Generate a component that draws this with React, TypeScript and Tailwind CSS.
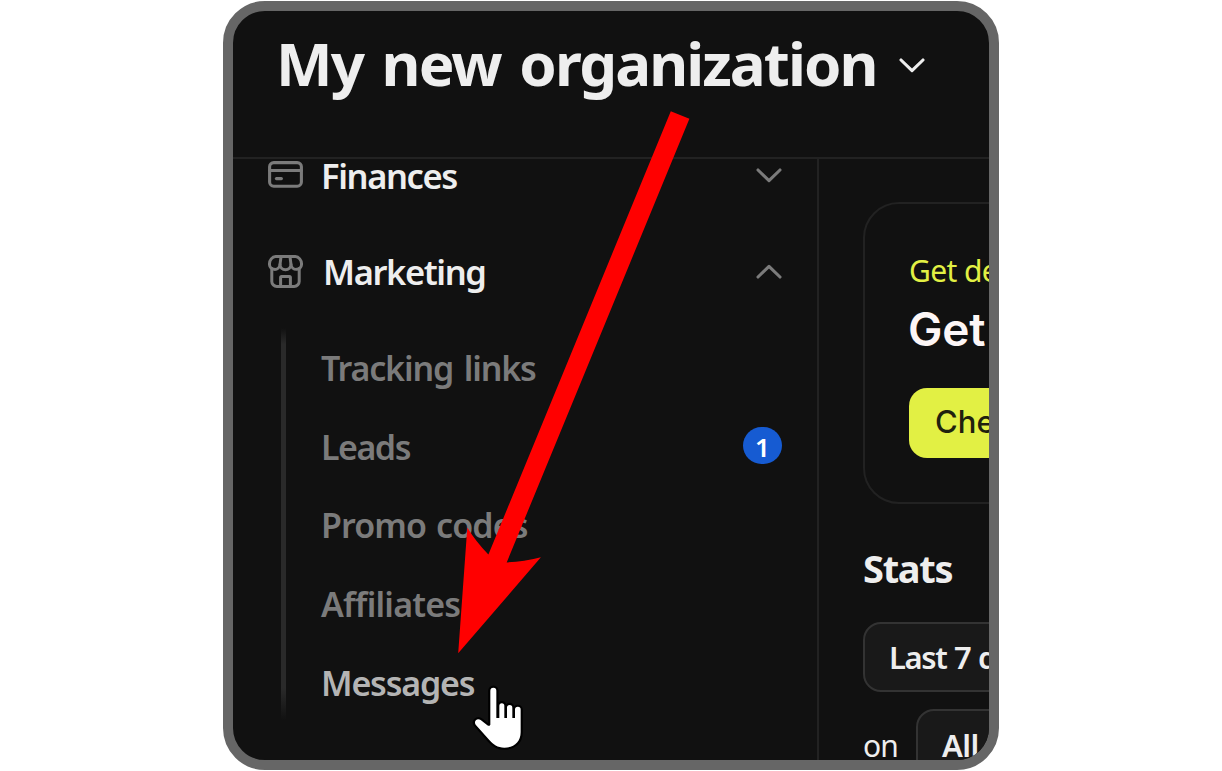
import React from "react";

interface SubItem {
  label: string;
  tracking: string;
  badge?: number;
  active?: boolean;
}

const subItems: SubItem[] = [
  { label: "Tracking links", tracking: "tracking-[-1.15px] [word-spacing:3px]" },
  { label: "Leads", tracking: "tracking-[-1.5px]", badge: 1 },
  { label: "Promo codes", tracking: "tracking-[-0.9px] [word-spacing:2px]" },
  { label: "Affiliates", tracking: "tracking-[-0.8px]" },
  { label: "Messages", tracking: "tracking-[-1.2px]", active: true },
];

const Chevron: React.FC<{ className?: string }> = ({ className = "" }) => (
  <svg
    width="26"
    height="15"
    viewBox="0 0 26 15"
    fill="none"
    stroke="currentColor"
    strokeWidth="3.1"
    strokeLinecap="round"
    strokeLinejoin="round"
    className={`shrink-0 ${className}`}
  >
    <path d="M2 2 L13 12.6 L24 2" />
  </svg>
);

const CardIcon = () => (
  <svg width="35" height="28" viewBox="0 0 35 28" fill="none" stroke="currentColor" strokeWidth="3.1" strokeLinecap="round">
    <rect x="1.6" y="1.6" width="31.8" height="23.6" rx="4.2" />
    <path d="M1.6 9.5 H33.4" />
    <path d="M8.4 17.6 H13.4" />
  </svg>
);

const StoreIcon = () => (
  <svg
    width="35"
    height="33"
    viewBox="0 0 35 33"
    fill="none"
    stroke="currentColor"
    strokeWidth="3"
    strokeLinecap="round"
    strokeLinejoin="round"
  >
    <path d="M7.6 1.6 H27.4 C30.8 1.6 33.5 5.4 33.5 8.6 A5.2 5.2 0 0 1 23 9.6 A5.5 5.2 0 0 1 12 9.6 A5.2 5.2 0 0 1 1.5 8.6 C1.5 5.4 4.2 1.6 7.6 1.6 Z" />
    <path d="M13 1.8 L12 9.6 M22 1.8 L23 9.6" />
    <path d="M3.8 13.4 V26.4 A5 5 0 0 0 8.8 31.4 H26.2 A5 5 0 0 0 31.2 26.4 V13.4" />
    <path d="M12.6 31 V22.6 A1 1 0 0 1 13.6 21.6 H21.4 A1 1 0 0 1 22.4 22.6 V31" />
  </svg>
);

const Sidebar = () => (
  <nav className="flex w-[586px] shrink-0 flex-col border-r-2 border-[#222222] pr-[35px] pl-[35px]">
    <div className="flex h-8 items-center text-[#7b7b7b]">
      <CardIcon />
      <span className="ml-[18px] flex-1 pt-px text-[34.5px] leading-8 font-semibold tracking-[-1.4px] text-[#eeeeee]">
        Finances
      </span>
      <Chevron />
    </div>

    <div className="mt-[64px] flex h-8 items-center text-[#7b7b7b]">
      <StoreIcon />
      <span className="ml-[20px] flex-1 pt-[2px] text-[34.5px] leading-8 font-semibold tracking-[-1.4px] text-[#eeeeee]">
        Marketing
      </span>
      <Chevron className="rotate-180" />
    </div>

    <div className="mt-[41px] flex">
      <div className="ml-[13px] h-[392px] w-[5px] bg-[linear-gradient(to_bottom,transparent,#2a2a2a_16px,#2a2a2a_calc(100%-32px),transparent)]" />
      <ul className="ml-[35px] flex-1">
        {subItems.map((item) => (
          <li
            key={item.label}
            className={`flex h-[78.75px] items-center justify-between pt-[2px] text-[34px] font-semibold ${item.tracking} ${
              item.active ? "text-[#b4b4b4]" : "text-[#7b7b7b]"
            }`}
          >
            {item.label}
            {item.badge && (
              <span className="-mt-[4px] flex h-[37px] w-[39px] items-center justify-center rounded-full bg-[#165bd2] pt-[4px] text-[26px] font-semibold tracking-normal text-white">
                {item.badge}
              </span>
            )}
          </li>
        ))}
      </ul>
    </div>
  </nav>
);

const Dashboard = () => (
  <main className="w-[400px] shrink-0 pt-[43px] pl-[44px] text-[#eeeeee]">
    <section className="h-[302px] rounded-[36px] border-2 border-[#222222] pt-[49px] pl-[44px]">
      <p className="text-[30px] leading-[36px] tracking-[-0.6px] text-[#e2f044]">Get demo</p>
      <h2 className="-ml-px mt-[12px] font-[Inter] text-[46px] leading-[56px] font-semibold tracking-[-0.2px] text-[#fdf6f6]">
        Get started
      </h2>
      <button className="mt-[31px] h-[70px] w-[240px] rounded-[18px] bg-[#e2f044] pb-[2px] pl-[26px] text-left font-[Inter] text-[31px] font-medium text-[#1f210e]">
        Check it out
      </button>
    </section>

    <h3 className="mt-[39px] text-[38px] leading-[50px] font-bold tracking-[-1.3px]">Stats</h3>
    <div className="mt-[29px] flex h-[70px] w-[240px] items-center rounded-[18px] border-2 border-[#333333] bg-[#191919] pt-px pl-[24px] text-[31px] font-semibold tracking-[-1.4px] [word-spacing:1px]">
      Last 7 days
    </div>
    <div className="mt-[17px] flex items-center">
      <span className="w-[53px] pt-[3px] text-[30px] tracking-[-0.8px]">on</span>
      <div className="flex h-[70px] w-[240px] items-center rounded-[18px] border-2 border-[#333333] bg-[#191919] pt-[2px] pl-[24px] text-[31px] font-semibold tracking-[-0.5px]">
        All time
      </div>
    </div>
  </main>
);

const PointerArrow = () => (
  <svg width="1222" height="771" viewBox="0 0 1222 771" className="pointer-events-none absolute top-0 left-0">
    <path
      d="M670.8 111.2 L689.4 118.8 L506.7 562.4 Q523 562 540.9 557.3 L458.2 653.3 L467.3 527.6 Q476 542 488.4 554.6 Z"
      fill="#ff0000"
    />
  </svg>
);

const HandCursor = () => (
  <svg width="52" height="65" viewBox="97 555 156 195" className="pointer-events-none absolute top-[685px] left-[472.3px]">
    <path
      d="M152 674 V572 A9 9 0 0 1 170 572 V654 H179 V617 A7.5 7.5 0 0 1 194 617 V654 H202 V623 A8 8 0 0 1 218 623 V654 H226 V629 A8.5 8.5 0 0 1 243 629 V697 C243 727 222 743 194 743 C174 743 160 733 149 720 L108 674 C101 664 112 653 123 660 L143 676 Q149 680 152 674 Z"
      fill="#ffffff"
      stroke="#000000"
      strokeWidth="13"
      strokeLinejoin="round"
      paintOrder="stroke"
    />
  </svg>
);

const App: React.FC = () => {
  return (
    <div className="relative h-[771px] w-[1222px] overflow-hidden bg-white pt-px font-['Noto_Sans',sans-serif]">
      <div className="mx-auto flex h-[769px] w-[776px] flex-col overflow-hidden rounded-[42px] border-10 border-[#666666] bg-[#111111]">
        <header className="flex h-[148px] shrink-0 items-start border-b-2 border-[#222222] pt-[12px] pl-[43px] text-[#eeeeee]">
          <h1 className="w-[600px] text-[60px] leading-[80px] font-bold tracking-[-1.95px] whitespace-nowrap [word-spacing:5px]">
            My new organization
          </h1>
          <Chevron className="mt-[35px] ml-[23px]" />
        </header>
        <div className="flex min-h-0 flex-1">
          <Sidebar />
          <Dashboard />
        </div>
      </div>
      <PointerArrow />
      <HandCursor />
    </div>
  );
};

export default App;
